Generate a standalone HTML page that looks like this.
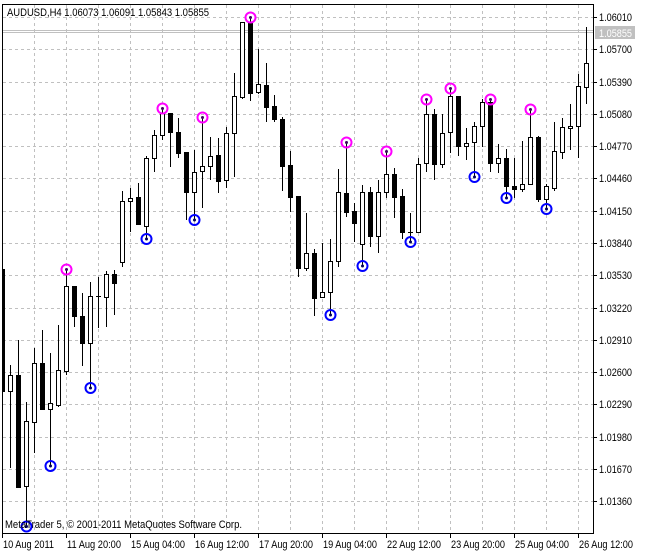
<!DOCTYPE html>
<html><head><meta charset="utf-8"><style>
html,body{margin:0;padding:0;background:#fff;}
svg{display:block;}
text{font-family:"Liberation Sans",sans-serif;font-size:11px;fill:#000;}
.g{stroke:#c0c0c0;stroke-width:1;stroke-dasharray:3 3;}
.wk{stroke:#000;stroke-width:1;}
.w{fill:#fff;stroke:#000;stroke-width:1;}
.b{fill:#000;stroke:#000;stroke-width:1;}
.m{fill:none;stroke:#ff00ff;stroke-width:2;}
.u{fill:none;stroke:#0000ff;stroke-width:2;}
</style></head><body>
<svg width="646" height="554" viewBox="0 0 646 554" xmlns="http://www.w3.org/2000/svg">
<rect width="646" height="554" fill="#fff"/>
<g id="grid">
<path class="g" d="M3 17.5H593M3 49.5H593M3 82.5H593M3 114.5H593M3 146.5H593M3 178.5H593M3 211.5H593M3 243.5H593M3 275.5H593M3 308.5H593M3 340.5H593M3 372.5H593M3 404.5H593M3 437.5H593M3 469.5H593M3 501.5H593"/>
<path class="g" d="M34.5 5V533M66.5 5V533M98.5 5V533M130.5 5V533M162.5 5V533M194.5 5V533M226.5 5V533M258.5 5V533M290.5 5V533M322.5 5V533M354.5 5V533M386.5 5V533M418.5 5V533M450.5 5V533M482.5 5V533M514.5 5V533M546.5 5V533M578.5 5V533"/>
</g>
<path d="M3 30.5H593M3 32.5H593" stroke="#c0c0c0" stroke-width="1"/>
<path d="M2.5 4V533.5H593.5V4.5H2" fill="none" stroke="#000" stroke-width="1"/>
<path stroke="#000" d="M593 17.5H597M593 49.5H597M593 82.5H597M593 114.5H597M593 146.5H597M593 178.5H597M593 211.5H597M593 243.5H597M593 275.5H597M593 308.5H597M593 340.5H597M593 372.5H597M593 404.5H597M593 437.5H597M593 469.5H597M593 501.5H597"/>
<path stroke="#000" d="M2.5 533V538M66.5 533V538M130.5 533V538M194.5 533V538M258.5 533V538M322.5 533V538M386.5 533V538M450.5 533V538M514.5 533V538M578.5 533V538"/>
<g id="candles">
<rect class="b" x="2.5" y="269.5" width="2" height="122"/>
<line class="wk" x1="10.5" y1="365" x2="10.5" y2="468"/><rect class="w" x="8.5" y="375.5" width="4" height="16"/>
<line class="wk" x1="18.5" y1="340" x2="18.5" y2="488"/><rect class="b" x="16.5" y="375.5" width="4" height="112"/>
<line class="wk" x1="26.5" y1="402" x2="26.5" y2="526"/><rect class="w" x="24.5" y="421.5" width="4" height="65"/>
<line class="wk" x1="34.5" y1="348" x2="34.5" y2="453"/><rect class="w" x="32.5" y="363.5" width="4" height="59"/>
<line class="wk" x1="42.5" y1="330" x2="42.5" y2="410"/><rect class="b" x="40.5" y="363.5" width="4" height="46"/>
<line class="wk" x1="50.5" y1="353" x2="50.5" y2="466"/><rect class="w" x="48.5" y="403.5" width="4" height="6"/>
<line class="wk" x1="58.5" y1="325" x2="58.5" y2="407"/><rect class="w" x="56.5" y="370.5" width="4" height="35"/>
<line class="wk" x1="66.5" y1="269" x2="66.5" y2="375"/><rect class="w" x="64.5" y="286.5" width="4" height="85"/>
<line class="wk" x1="74.5" y1="286" x2="74.5" y2="327"/><rect class="b" x="72.5" y="286.5" width="4" height="30"/>
<line class="wk" x1="82.5" y1="293" x2="82.5" y2="366"/><rect class="b" x="80.5" y="316.5" width="4" height="27"/>
<line class="wk" x1="90.5" y1="282" x2="90.5" y2="388"/><rect class="w" x="88.5" y="296.5" width="4" height="47"/>
<line class="wk" x1="98.5" y1="277" x2="98.5" y2="328"/><line class="wk" x1="96" y1="296.5" x2="101" y2="296.5"/>
<line class="wk" x1="106.5" y1="271" x2="106.5" y2="327"/><rect class="w" x="104.5" y="274.5" width="4" height="23"/>
<line class="wk" x1="114.5" y1="270" x2="114.5" y2="315"/><rect class="b" x="112.5" y="274.5" width="4" height="9"/>
<line class="wk" x1="122.5" y1="191" x2="122.5" y2="267"/><rect class="w" x="120.5" y="201.5" width="4" height="61"/>
<line class="wk" x1="130.5" y1="188" x2="130.5" y2="232"/><rect class="w" x="128.5" y="198.5" width="4" height="3"/>
<line class="wk" x1="138.5" y1="183" x2="138.5" y2="224"/><rect class="b" x="136.5" y="197.5" width="4" height="27"/>
<line class="wk" x1="146.5" y1="156" x2="146.5" y2="239"/><rect class="w" x="144.5" y="158.5" width="4" height="68"/>
<line class="wk" x1="154.5" y1="130" x2="154.5" y2="172"/><rect class="w" x="152.5" y="135.5" width="4" height="23"/>
<line class="wk" x1="162.5" y1="108" x2="162.5" y2="140"/><rect class="w" x="160.5" y="113.5" width="4" height="22"/>
<line class="wk" x1="170.5" y1="113" x2="170.5" y2="167"/><rect class="b" x="168.5" y="113.5" width="4" height="19"/>
<line class="wk" x1="178.5" y1="118" x2="178.5" y2="158"/><rect class="b" x="176.5" y="132.5" width="4" height="21"/>
<line class="wk" x1="186.5" y1="152" x2="186.5" y2="220"/><rect class="b" x="184.5" y="152.5" width="4" height="40"/>
<line class="wk" x1="194.5" y1="150" x2="194.5" y2="220"/><rect class="w" x="192.5" y="172.5" width="4" height="20"/>
<line class="wk" x1="202.5" y1="117" x2="202.5" y2="208"/><rect class="w" x="200.5" y="166.5" width="4" height="5"/>
<line class="wk" x1="210.5" y1="137" x2="210.5" y2="180"/><rect class="w" x="208.5" y="156.5" width="4" height="10"/>
<line class="wk" x1="218.5" y1="138" x2="218.5" y2="193"/><rect class="b" x="216.5" y="155.5" width="4" height="26"/>
<line class="wk" x1="226.5" y1="127" x2="226.5" y2="188"/><rect class="w" x="224.5" y="133.5" width="4" height="47"/>
<line class="wk" x1="234.5" y1="73" x2="234.5" y2="177"/><rect class="w" x="232.5" y="96.5" width="4" height="37"/>
<line class="wk" x1="242.5" y1="22" x2="242.5" y2="99"/><rect class="w" x="240.5" y="22.5" width="4" height="75"/>
<line class="wk" x1="250.5" y1="17" x2="250.5" y2="101"/><rect class="b" x="248.5" y="22.5" width="4" height="71"/>
<line class="wk" x1="258.5" y1="49" x2="258.5" y2="94"/><rect class="w" x="256.5" y="84.5" width="4" height="8"/>
<line class="wk" x1="266.5" y1="63" x2="266.5" y2="122"/><rect class="b" x="264.5" y="85.5" width="4" height="22"/>
<line class="wk" x1="274.5" y1="95" x2="274.5" y2="122"/><rect class="b" x="272.5" y="106.5" width="4" height="13"/>
<line class="wk" x1="282.5" y1="117" x2="282.5" y2="191"/><rect class="b" x="280.5" y="119.5" width="4" height="47"/>
<line class="wk" x1="290.5" y1="151" x2="290.5" y2="212"/><rect class="b" x="288.5" y="165.5" width="4" height="32"/>
<line class="wk" x1="298.5" y1="196" x2="298.5" y2="277"/><rect class="b" x="296.5" y="196.5" width="4" height="72"/>
<line class="wk" x1="306.5" y1="213" x2="306.5" y2="271"/><rect class="w" x="304.5" y="253.5" width="4" height="15"/>
<line class="wk" x1="314.5" y1="249" x2="314.5" y2="316"/><rect class="b" x="312.5" y="253.5" width="4" height="45"/>
<line class="wk" x1="322.5" y1="243" x2="322.5" y2="297"/><rect class="w" x="320.5" y="292.5" width="4" height="5"/>
<line class="wk" x1="330.5" y1="239" x2="330.5" y2="315"/><rect class="w" x="328.5" y="261.5" width="4" height="31"/>
<line class="wk" x1="338.5" y1="169" x2="338.5" y2="267"/><rect class="w" x="336.5" y="192.5" width="4" height="69"/>
<line class="wk" x1="346.5" y1="142" x2="346.5" y2="217"/><rect class="b" x="344.5" y="193.5" width="4" height="19"/>
<line class="wk" x1="354.5" y1="203" x2="354.5" y2="242"/><rect class="b" x="352.5" y="211.5" width="4" height="12"/>
<line class="wk" x1="362.5" y1="185" x2="362.5" y2="266"/><rect class="w" x="360.5" y="192.5" width="4" height="52"/>
<line class="wk" x1="370.5" y1="187" x2="370.5" y2="247"/><rect class="b" x="368.5" y="192.5" width="4" height="44"/>
<line class="wk" x1="378.5" y1="180" x2="378.5" y2="253"/><rect class="w" x="376.5" y="192.5" width="4" height="44"/>
<line class="wk" x1="386.5" y1="151" x2="386.5" y2="198"/><rect class="w" x="384.5" y="174.5" width="4" height="18"/>
<line class="wk" x1="394.5" y1="168" x2="394.5" y2="218"/><rect class="b" x="392.5" y="174.5" width="4" height="23"/>
<line class="wk" x1="402.5" y1="189" x2="402.5" y2="239"/><rect class="b" x="400.5" y="196.5" width="4" height="36"/>
<line class="wk" x1="410.5" y1="213" x2="410.5" y2="242"/><line class="wk" x1="408" y1="232.5" x2="413" y2="232.5"/>
<line class="wk" x1="418.5" y1="158" x2="418.5" y2="232"/><rect class="w" x="416.5" y="164.5" width="4" height="68"/>
<line class="wk" x1="426.5" y1="99" x2="426.5" y2="172"/><rect class="w" x="424.5" y="114.5" width="4" height="49"/>
<line class="wk" x1="434.5" y1="109" x2="434.5" y2="180"/><rect class="b" x="432.5" y="114.5" width="4" height="50"/>
<line class="wk" x1="442.5" y1="114" x2="442.5" y2="168"/><rect class="w" x="440.5" y="133.5" width="4" height="31"/>
<line class="wk" x1="450.5" y1="88" x2="450.5" y2="153"/><rect class="w" x="448.5" y="96.5" width="4" height="36"/>
<line class="wk" x1="458.5" y1="96" x2="458.5" y2="156"/><rect class="b" x="456.5" y="96.5" width="4" height="50"/>
<line class="wk" x1="466.5" y1="128" x2="466.5" y2="160"/><rect class="w" x="464.5" y="143.5" width="4" height="3"/>
<line class="wk" x1="474.5" y1="122" x2="474.5" y2="177"/><rect class="w" x="472.5" y="126.5" width="4" height="16"/>
<line class="wk" x1="482.5" y1="99" x2="482.5" y2="147"/><rect class="w" x="480.5" y="102.5" width="4" height="24"/>
<line class="wk" x1="490.5" y1="99" x2="490.5" y2="172"/><rect class="b" x="488.5" y="102.5" width="4" height="61"/>
<line class="wk" x1="498.5" y1="144" x2="498.5" y2="173"/><rect class="w" x="496.5" y="158.5" width="4" height="5"/>
<line class="wk" x1="506.5" y1="149" x2="506.5" y2="198"/><rect class="b" x="504.5" y="158.5" width="4" height="28"/>
<line class="wk" x1="514.5" y1="158" x2="514.5" y2="198"/><rect class="b" x="512.5" y="186.5" width="4" height="3"/>
<line class="wk" x1="522.5" y1="141" x2="522.5" y2="192"/><rect class="w" x="520.5" y="184.5" width="4" height="5"/>
<line class="wk" x1="530.5" y1="109" x2="530.5" y2="184"/><rect class="w" x="528.5" y="137.5" width="4" height="47"/>
<line class="wk" x1="538.5" y1="136" x2="538.5" y2="202"/><rect class="b" x="536.5" y="137.5" width="4" height="62"/>
<line class="wk" x1="546.5" y1="184" x2="546.5" y2="209"/><rect class="w" x="544.5" y="186.5" width="4" height="13"/>
<line class="wk" x1="554.5" y1="122" x2="554.5" y2="191"/><rect class="w" x="552.5" y="151.5" width="4" height="37"/>
<line class="wk" x1="562.5" y1="118" x2="562.5" y2="159"/><rect class="w" x="560.5" y="127.5" width="4" height="25"/>
<line class="wk" x1="570.5" y1="104" x2="570.5" y2="150"/><rect class="w" x="568.5" y="126.5" width="4" height="2"/>
<line class="wk" x1="578.5" y1="74" x2="578.5" y2="158"/><rect class="w" x="576.5" y="86.5" width="4" height="40"/>
<line class="wk" x1="586.5" y1="27" x2="586.5" y2="104"/><rect class="w" x="584.5" y="63.5" width="4" height="24"/>
</g>
<g id="marks">
<circle class="m" cx="66.5" cy="269.5" r="5"/><circle class="m" cx="162.5" cy="108.5" r="5"/><circle class="m" cx="202.5" cy="117.5" r="5"/><circle class="m" cx="250.5" cy="17.5" r="5"/><circle class="m" cx="346.5" cy="142.5" r="5"/><circle class="m" cx="386.5" cy="151.5" r="5"/><circle class="m" cx="426.5" cy="99.5" r="5"/><circle class="m" cx="450.5" cy="88.5" r="5"/><circle class="m" cx="490.5" cy="99.5" r="5"/><circle class="m" cx="530.5" cy="109.5" r="5"/>
<circle class="u" cx="26.5" cy="526.5" r="5"/><circle class="u" cx="50.5" cy="466" r="5"/><circle class="u" cx="90.5" cy="388" r="5"/><circle class="u" cx="146.5" cy="239" r="5"/><circle class="u" cx="194.5" cy="220" r="5"/><circle class="u" cx="330.5" cy="315" r="5"/><circle class="u" cx="362.5" cy="266" r="5"/><circle class="u" cx="410.5" cy="242" r="5"/><circle class="u" cx="474.5" cy="177" r="5"/><circle class="u" cx="506.5" cy="198" r="5"/><circle class="u" cx="546.5" cy="209" r="5"/>
<g fill="#400060">
<circle cx="66.5" cy="269.5" r="1.5"/><circle cx="162.5" cy="108.5" r="1.5"/><circle cx="202.5" cy="117.5" r="1.5"/><circle cx="250.5" cy="17.5" r="1.5"/><circle cx="346.5" cy="142.5" r="1.5"/><circle cx="386.5" cy="151.5" r="1.5"/><circle cx="426.5" cy="99.5" r="1.5"/><circle cx="450.5" cy="88.5" r="1.5"/><circle cx="490.5" cy="99.5" r="1.5"/><circle cx="530.5" cy="109.5" r="1.5"/>
</g>
<g fill="#000060">
<circle cx="26.5" cy="526.5" r="1.5"/><circle cx="50.5" cy="466" r="1.5"/><circle cx="90.5" cy="388" r="1.5"/><circle cx="146.5" cy="239" r="1.5"/><circle cx="194.5" cy="220" r="1.5"/><circle cx="330.5" cy="315" r="1.5"/><circle cx="362.5" cy="266" r="1.5"/><circle cx="410.5" cy="242" r="1.5"/><circle cx="474.5" cy="177" r="1.5"/><circle cx="506.5" cy="198" r="1.5"/><circle cx="546.5" cy="209" r="1.5"/>
</g>
</g>
<text x="7" y="16" textLength="202" lengthAdjust="spacingAndGlyphs">AUDUSD,H4  1.06073 1.06091 1.05843 1.05855</text>
<text x="5" y="528" textLength="237" lengthAdjust="spacingAndGlyphs">MetaTrader 5, © 2001-2011 MetaQuotes Software Corp.</text>
<g>
<text x="599" y="21" textLength="33" lengthAdjust="spacingAndGlyphs">1.06010</text>
<rect x="595" y="26" width="40" height="13" fill="#c0c0c0"/>
<text x="599" y="37" style="fill:#fff" textLength="33" lengthAdjust="spacingAndGlyphs">1.05855</text>
<text x="599" y="53" textLength="33" lengthAdjust="spacingAndGlyphs">1.05700</text>
<text x="599" y="86" textLength="33" lengthAdjust="spacingAndGlyphs">1.05390</text>
<text x="599" y="118" textLength="33" lengthAdjust="spacingAndGlyphs">1.05080</text>
<text x="599" y="150" textLength="33" lengthAdjust="spacingAndGlyphs">1.04770</text>
<text x="599" y="182" textLength="33" lengthAdjust="spacingAndGlyphs">1.04460</text>
<text x="599" y="215" textLength="33" lengthAdjust="spacingAndGlyphs">1.04150</text>
<text x="599" y="247" textLength="33" lengthAdjust="spacingAndGlyphs">1.03840</text>
<text x="599" y="279" textLength="33" lengthAdjust="spacingAndGlyphs">1.03530</text>
<text x="599" y="312" textLength="33" lengthAdjust="spacingAndGlyphs">1.03220</text>
<text x="599" y="344" textLength="33" lengthAdjust="spacingAndGlyphs">1.02910</text>
<text x="599" y="376" textLength="33" lengthAdjust="spacingAndGlyphs">1.02600</text>
<text x="599" y="408" textLength="33" lengthAdjust="spacingAndGlyphs">1.02290</text>
<text x="599" y="441" textLength="33" lengthAdjust="spacingAndGlyphs">1.01980</text>
<text x="599" y="473" textLength="33" lengthAdjust="spacingAndGlyphs">1.01670</text>
<text x="599" y="505" textLength="33" lengthAdjust="spacingAndGlyphs">1.01360</text>
</g>
<g>
<text x="3" y="548" textLength="51" lengthAdjust="spacingAndGlyphs">10 Aug 2011</text>
<text x="67" y="548" textLength="54" lengthAdjust="spacingAndGlyphs">11 Aug 20:00</text>
<text x="131" y="548" textLength="54" lengthAdjust="spacingAndGlyphs">15 Aug 04:00</text>
<text x="195" y="548" textLength="54" lengthAdjust="spacingAndGlyphs">16 Aug 12:00</text>
<text x="259" y="548" textLength="54" lengthAdjust="spacingAndGlyphs">17 Aug 20:00</text>
<text x="323" y="548" textLength="54" lengthAdjust="spacingAndGlyphs">19 Aug 04:00</text>
<text x="387" y="548" textLength="54" lengthAdjust="spacingAndGlyphs">22 Aug 12:00</text>
<text x="451" y="548" textLength="54" lengthAdjust="spacingAndGlyphs">23 Aug 20:00</text>
<text x="515" y="548" textLength="54" lengthAdjust="spacingAndGlyphs">25 Aug 04:00</text>
<text x="579" y="548" textLength="54" lengthAdjust="spacingAndGlyphs">26 Aug 12:00</text>
</g>
</svg>
</body></html>
